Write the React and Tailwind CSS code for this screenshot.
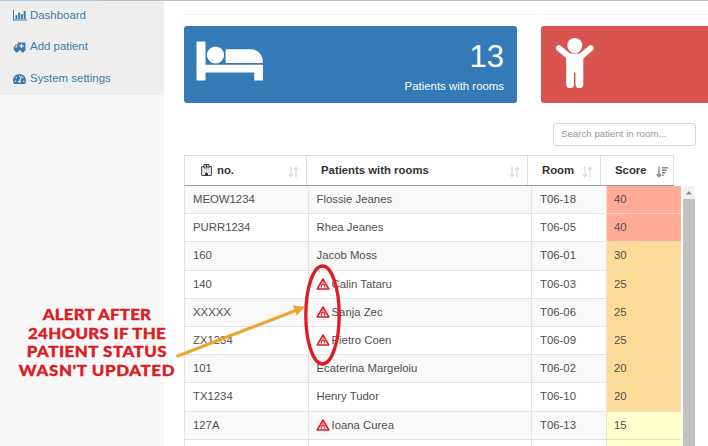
import { FaTachometerAlt } from "react-icons/fa";

const patients = [
  ["MEOW1234", "Flossie Jeanes", "T06-18", 40, false],
  ["PURR1234", "Rhea Jeanes", "T06-05", 40, false],
  ["160", "Jacob Moss", "T06-01", 30, false],
  ["140", "Calin Tataru", "T06-03", 25, true],
  ["XXXXX", "Sanja Zec", "T06-06", 25, true],
  ["ZX1234", "Pietro Coen", "T06-09", 25, true],
  ["101", "Ecaterina Margeloiu", "T06-02", 20, false],
  ["TX1234", "Henry Tudor", "T06-10", 20, false],
  ["127A", "Ioana Curea", "T06-13", 15, true],
  ["", "", "", null, false],
];

function scoreColor(score) {
  if (score >= 40) return "bg-[#ffab97]";
  if (score >= 20) return "bg-[#ffdb99]";
  return "bg-[#ffffce]";
}

function ChartIcon() {
  return (
    <svg className="h-[11px] w-[14px]" viewBox="0 0 14 11" fill="currentColor">
      <path d="M0 0h1v9.6h13v1H0zM2.4 5.2h2v3.7h-2zM5.2 2.8h2v6.1h-2zM7.9 4.2h2v4.7h-2zM10.7 1h2v7.9h-2z" />
    </svg>
  );
}

function AmbulanceIcon() {
  return (
    <svg className="h-[11px] w-[13px]" viewBox="0 0 12 11" fill="currentColor">
      <path
        fillRule="evenodd"
        d="M4.3.5h7.2q.5 0 .5.5v7.4h-1a1.7 1.7 0 0 1-3.4 0H5a1.7 1.7 0 0 1-3.4 0H.2V5.2L2 2.6h2.3zM3.6 3.6h-1L1.3 5.5h2.3zM7.4 1.8v1.5H5.9v1.1h1.5v1.5h1.2V4.4h1.5V3.3H8.6V1.8z"
      />
      <circle cx="3.3" cy="8.9" r="1.6" />
      <circle cx="9.3" cy="8.9" r="1.6" />
    </svg>
  );
}

function HospitalIcon() {
  return (
    <svg className="h-[12px] w-[11px]" viewBox="0 0 11 12" fill="none" stroke="#333">
      <path d="M3 2.6H.7v8.8h9.6V2.6H8M3 3.9V.6h5v3.3z" />
      <path d="M5.5 1v2.4M4.3 2.2h2.4" strokeWidth="0.9" />
      <path d="M2.6 5.8h.9M5 5.8h1M7.5 5.8h.9M2.6 8h.9M5 8h1M7.5 8h.9" stroke="#777" />
      <path d="M4.5 9.3h2v2h-2z" fill="#333" />
    </svg>
  );
}

function AlertIcon() {
  return (
    <svg className="-ml-[1px] mr-[2px] mb-[1px] h-[12px] w-[14px]" viewBox="0 0 14 12" fill="none" stroke="#dd1c24">
      <path d="M7 1L12.8 11H1.2z" strokeWidth="1.5" strokeLinejoin="round" />
      <path d="M7 3.8V7M5.3 6.6V9.8M8.7 6.6V9.8M5 6.7h4" strokeWidth="1.1" />
    </svg>
  );
}

function SortIcon() {
  return (
    <svg className="mt-[3px] h-[12px] w-[11px]" viewBox="0 0 11 12" fill="none" stroke="#dfdfdf" strokeWidth="1.4">
      <path d="M3 .5v10M1 8.5l2 2.3 2-2.3M8 11.5v-10M6 3.5l2-2.3 2 2.3" />
    </svg>
  );
}

function SortDescIcon() {
  return (
    <svg className="mt-[2px] h-[12px] w-[12px]" viewBox="0 0 12 12" fill="none" stroke="#888" strokeWidth="1.4">
      <path d="M3 .5v10M.8 8.3L3 10.8l2.2-2.5M6 1.7h6M6 4.2h4.7M6 6.7h3.3M6 9.2h1.8" />
    </svg>
  );
}

function NavItem({ icon, label, className }) {
  return (
    <a className={"flex items-center pl-[13px] text-[11.45px] text-[#3d7ab0] " + className}>
      <span className="flex w-[17px] items-center">{icon}</span>
      {label}
    </a>
  );
}

function HeaderCell({ children, icon, className }) {
  return (
    <div className={"flex items-center justify-between border-r border-[#ddd] " + className}>
      <span className="flex items-center gap-[5px] whitespace-nowrap">{children}</span>
      {icon}
    </div>
  );
}

function Callout() {
  return (
    <>
      <div className="absolute top-[305px] left-0 h-[74px] w-[194px] scale-x-[1.08] text-center font-['Lato','Open_Sans',sans-serif] text-[15.6px] leading-[18.5px] font-black whitespace-nowrap text-[#dc1b22] [-webkit-text-stroke:0.35px_#dc1b22]">
        <div className="tracking-[0.2px]">ALERT AFTER</div>
        <div className="tracking-[0.3px]">24HOURS IF THE</div>
        <div className="tracking-[0.5px]">PATIENT STATUS</div>
        <div className="tracking-[0.6px]">WASN'T UPDATED</div>
      </div>
      <svg className="absolute inset-0 h-[446px] w-[708px]" viewBox="0 0 708 446" fill="none">
        <path d="M176.5 356.5L297 310" stroke="#eba531" strokeWidth="3.2" />
        <path d="M293 305.6l12 1.2-8.2 8.6z" fill="#eba531" />
        <ellipse cx="322.5" cy="315" rx="16.7" ry="49" stroke="#e11b22" strokeWidth="3.3" />
      </svg>
    </>
  );
}

export default function App() {
  return (
    <div className="relative flex h-[446px] w-[708px] overflow-hidden bg-white font-['Liberation_Sans',Arial,sans-serif] text-[11.35px] text-[#4f4f4f]">
      <aside className="w-[164px] shrink-0 bg-[#f8f8f8]">
        <div className="flex h-px bg-[#bdbdbd]">
          <div className="h-px w-[100px] bg-[#a5cfe8]" />
        </div>
        <nav className="h-[94px] bg-[#eee]">
          <NavItem className="h-[30px] border-b border-[#eaeaea]" icon={<ChartIcon />} label="Dashboard" />
          <NavItem className="h-[33px] border-b border-[#eaeaea]" icon={<AmbulanceIcon />} label="Add patient" />
          <NavItem className="h-[30px]" icon={<FaTachometerAlt className="h-[12px] w-[13px]" />} label="System settings" />
        </nav>
      </aside>

      <main className="w-[544px] shrink-0">
        <div className="h-px bg-[#bdbdbd]" />
        <div className="ml-[20px] h-[14px] border-b border-[#f0f0f0]" />
        <div className="mt-[11px] ml-[20px] flex gap-[24px]">
          <section className="flex h-[77px] w-[333px] shrink-0 justify-between rounded-[3px] bg-[#347ab6] text-white">
            <svg className="mt-[15px] ml-[12px] h-[40px] w-[68px]" viewBox="0 0 68 40" fill="currentColor">
              <rect x="0.5" y="0.5" width="9" height="39" rx="1" />
              <circle cx="19.5" cy="14" r="8.6" />
              <path d="M30.8 8.3H55c7 0 12 5 12 13.7H29.6V9.5q0-1.2 1.2-1.2zM8 23.7h58q1 0 1 1v14.8h-8.8V31.5H8z" />
            </svg>
            <div className="mt-[14px] mr-[13px] text-right">
              <div className="text-[31px] leading-[34px]">13</div>
              <div className="mt-[5px] text-[11.4px] leading-[14px]">Patients with rooms</div>
            </div>
          </section>
          <section className="h-[77px] w-[190px] shrink-0 rounded-l-[3px] bg-[#d9534f] text-white">
            <svg className="mt-[12px] ml-[14px] h-[51px] w-[40px]" viewBox="0 0 40 51" fill="currentColor">
              <circle cx="19.8" cy="7.6" r="7.5" />
              <path
                d="M4 10.2L14 18.5H26L35.6 10.2"
                fill="none"
                stroke="currentColor"
                strokeWidth="6"
                strokeLinecap="round"
                strokeLinejoin="round"
              />
              <path d="M11.2 16H28.3V46.2a3.6 3.6 0 0 1-7.8 0V34.5H19V46.2a3.6 3.6 0 0 1-7.8 0z" />
            </svg>
          </section>
        </div>

        <div className="mt-[20px] ml-[389px] flex h-[23px] w-[143px] items-center rounded-[3px] border border-[#d5d5d5] pl-[7px] text-[9.7px] text-[#999]">
          Search patient in room...
        </div>

        <div className="mt-[9px] ml-[20px] flex h-[31px] w-[490px] border-t border-b border-l border-[#ddd] border-b-[#999] font-bold text-[#333]">
          <HeaderCell className="w-[122px] pr-[7px] pl-[16px]" icon={<SortIcon />}>
            <HospitalIcon />
            no.
          </HeaderCell>
          <HeaderCell className="w-[221px] pr-[7px] pl-[14px]" icon={<SortIcon />}>
            Patients with rooms
          </HeaderCell>
          <HeaderCell className="w-[73px] pr-[7px] pl-[14px]" icon={<SortIcon />}>
            Room
          </HeaderCell>
          <HeaderCell className="w-[73px] pr-[5px] pl-[14px]" icon={<SortDescIcon />}>
            Score
          </HeaderCell>
        </div>

        <div className="ml-[20px] flex h-[260px] overflow-hidden">
          <div className="w-[497px] shrink-0">
            {patients.map(([number, name, room, score, alert], i) => (
              <div
                key={i}
                className={
                  "flex h-[28.2px] border-l border-[#e4e4e4] leading-[27px] " + (i % 2 === 0 ? "bg-[#f9f9f9]" : "bg-white")
                }
              >
                <div className="w-[124px] border-r border-b border-[#e4e4e4] pl-[8px]">{number}</div>
                <div className="flex w-[223px] items-center border-r border-b border-[#e4e4e4] pl-[7.5px]">
                  {alert && <AlertIcon />}
                  {name}
                </div>
                <div className="w-[75px] border-r border-b border-[#e4e4e4] pl-[8px]">{room}</div>
                <div className={"w-[74px] border-b border-[#eed9b4] pl-[7px] " + scoreColor(score)}>{score}</div>
              </div>
            ))}
          </div>
          <div className="ml-[2px] w-[12px] shrink-0 bg-[#c1c1c1]">
            <div className="flex h-[13px] items-center justify-center bg-[#f1f1f1]">
              <svg className="h-[4px] w-[6px]" viewBox="0 0 6 4" fill="#888">
                <path d="M3 0l3 3.5H0z" />
              </svg>
            </div>
          </div>
        </div>
      </main>

      <Callout />
    </div>
  );
}
